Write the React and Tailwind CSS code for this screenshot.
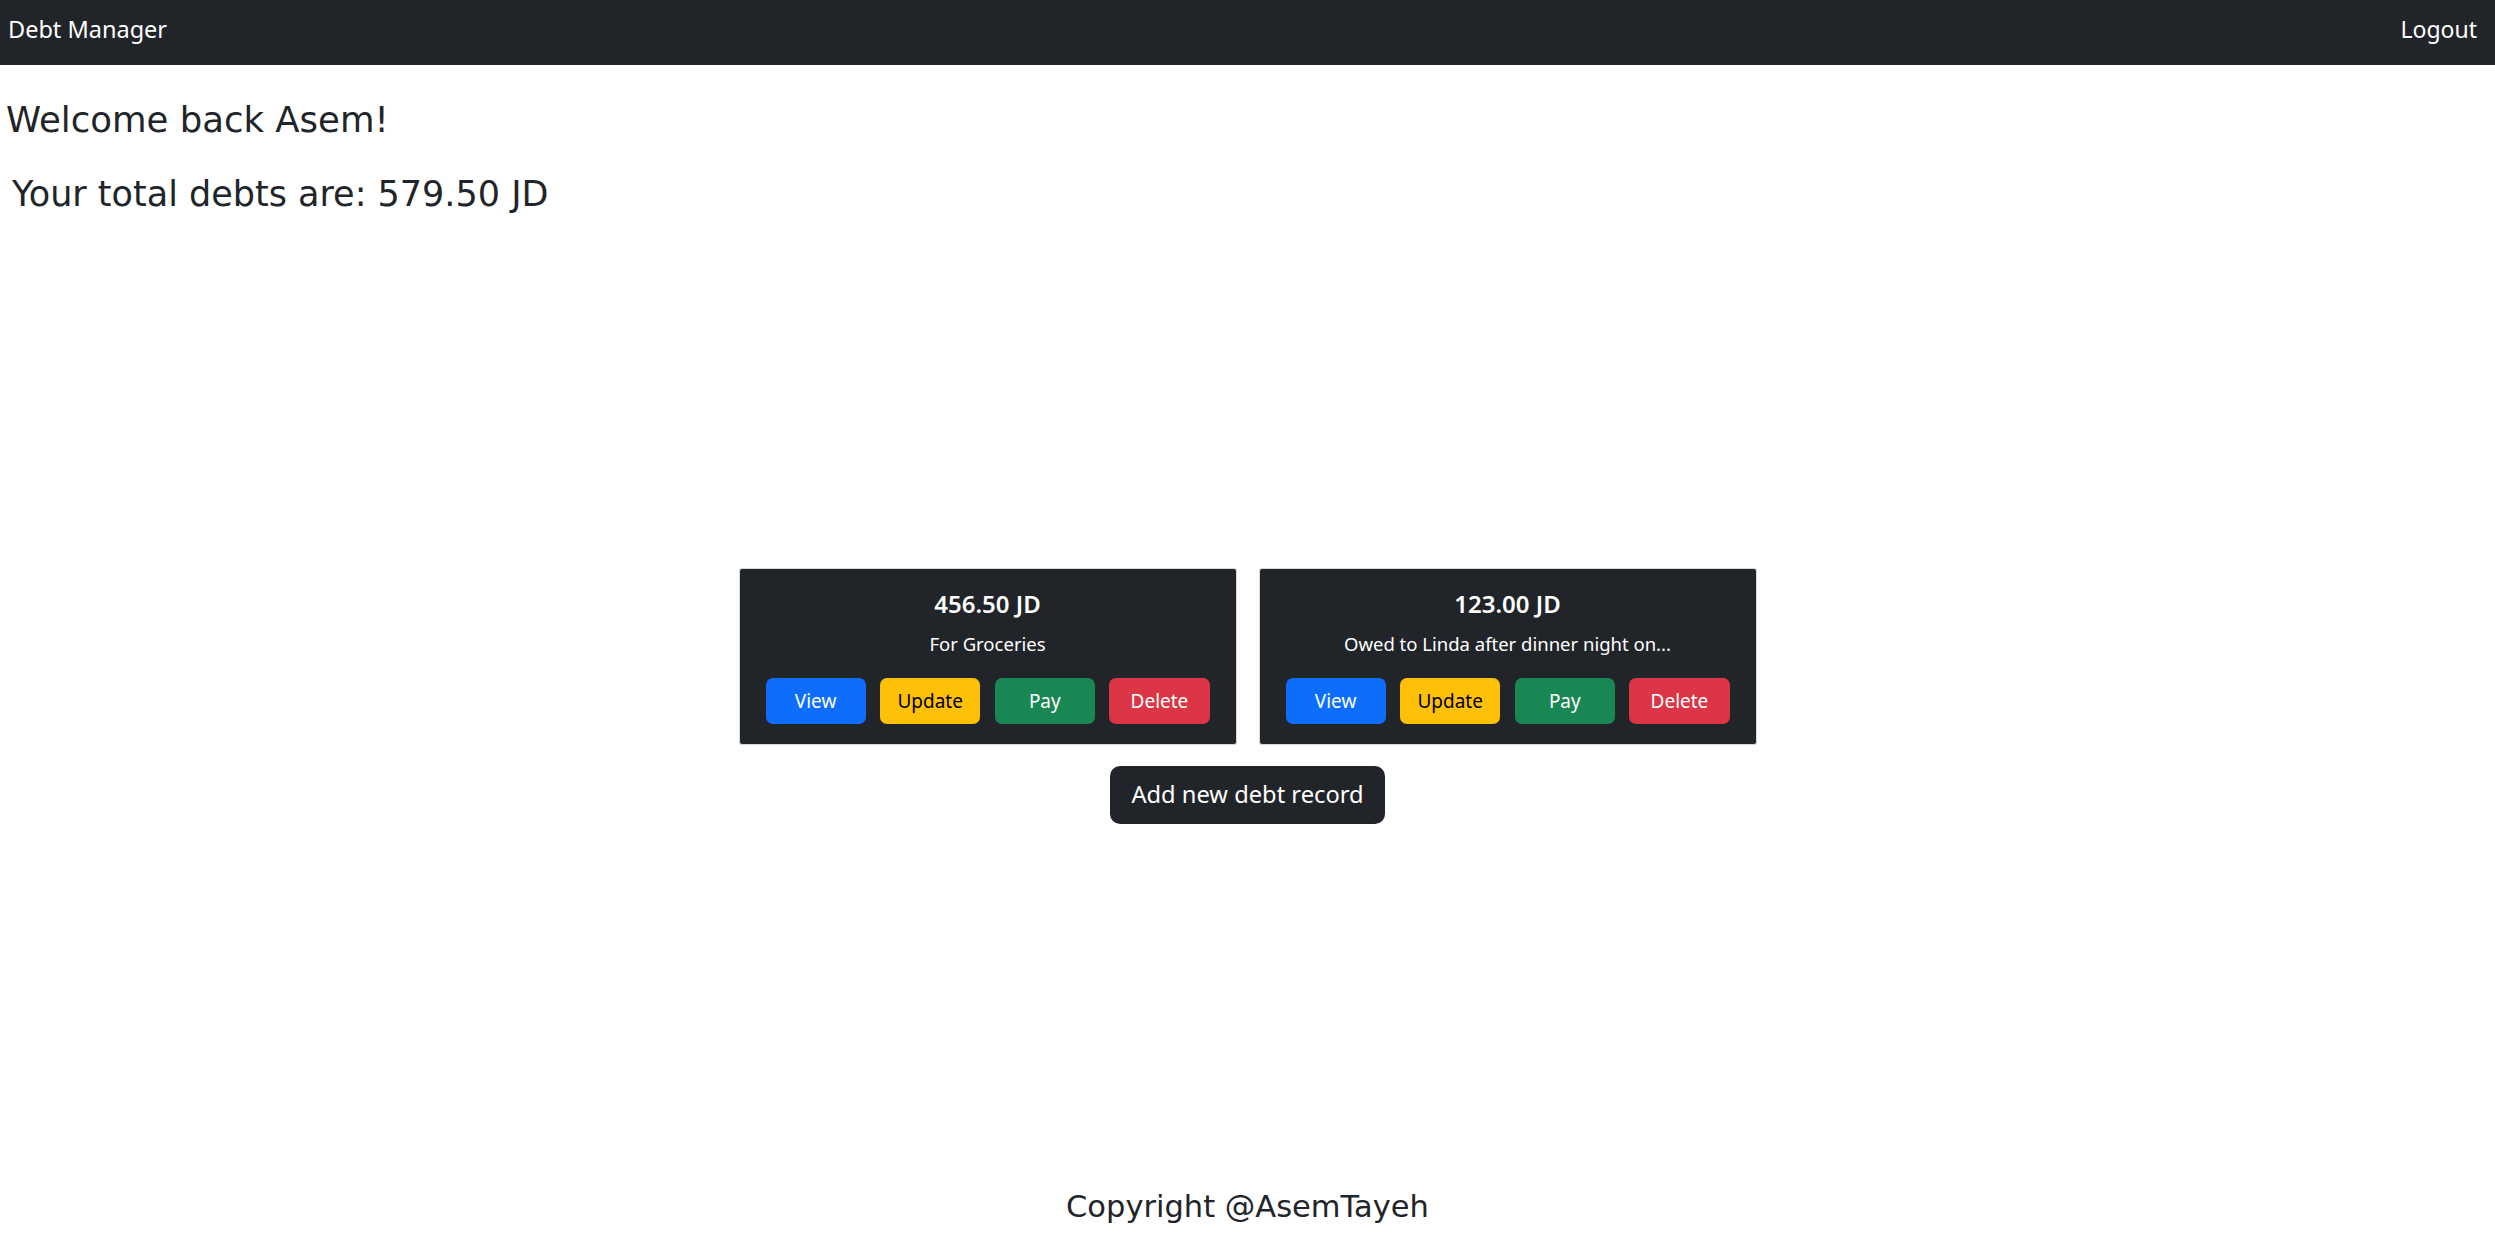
const debts = [
  { id: 1, amount: "456.50", note: "For Groceries" },
  { id: 2, amount: "123.00", note: "Owed to Linda after dinner night on..." },
];

function DebtCard({ amount, note }) {
  return (
    <div className="w-[498px] bg-[#212529] border border-[#d6d8db] rounded-[3px] px-[26px] pt-[20px] pb-[20px] text-white text-center">
      <h5 className="text-[24px] leading-[30px] font-semibold">{amount} JD</h5>
      <p className="text-[18.5px] leading-[27px] mt-[11px]">{note}</p>
      <div className="flex gap-[14.5px] mt-[21px]">
        <button className="flex-1 h-[46px] rounded-[7px] bg-[#0d6efd] text-white text-[19px]">View</button>
        <button className="flex-1 h-[46px] rounded-[7px] bg-[#ffc107] text-black text-[19px]">Update</button>
        <button className="flex-1 h-[46px] rounded-[7px] bg-[#198754] text-white text-[19px]">Pay</button>
        <button className="flex-1 h-[46px] rounded-[7px] bg-[#dc3545] text-white text-[19px]">Delete</button>
      </div>
    </div>
  );
}

export default function App() {
  return (
    <div className="h-[1240px] flex flex-col bg-white text-[#212529] font-['Segoe_UI','Noto_Sans','Open_Sans',sans-serif]">
      {/* Navbar */}
      <nav className="h-[65px] shrink-0 bg-[#212529] flex items-start justify-between pt-[13px] pl-[8px] pr-[18px] text-white leading-[32px]">
        <span className="text-[23.5px]">Debt Manager</span>
        <span className="text-[23px]">Logout</span>
      </nav>

      {/* Greeting */}
      <div className="font-['DejaVu_Sans',sans-serif]">
        <h1 className="text-[35.5px] leading-[42px] mt-[34px] pl-[6px]">Welcome back Asem!</h1>
        <h2 className="text-[35px] leading-[42px] mt-[32px] pl-[12px]">Your total debts are: 579.50 JD</h2>
      </div>

      {/* Debt cards */}
      <div className="flex flex-col items-center mt-[353px]">
        <div className="flex gap-[22px]">
          {debts.map((d) => (
            <DebtCard key={d.id} {...d} />
          ))}
        </div>
        <button className="mt-[21px] h-[58px] w-[275px] rounded-[10px] bg-[#212529] text-white text-[23.7px]">
          Add new debt record
        </button>
      </div>

      {/* Footer */}
      <footer className="mt-auto pb-[15px] text-center text-[30.5px] leading-[36px] font-['DejaVu_Sans',sans-serif]">
        Copyright @AsemTayeh
      </footer>
    </div>
  );
}
